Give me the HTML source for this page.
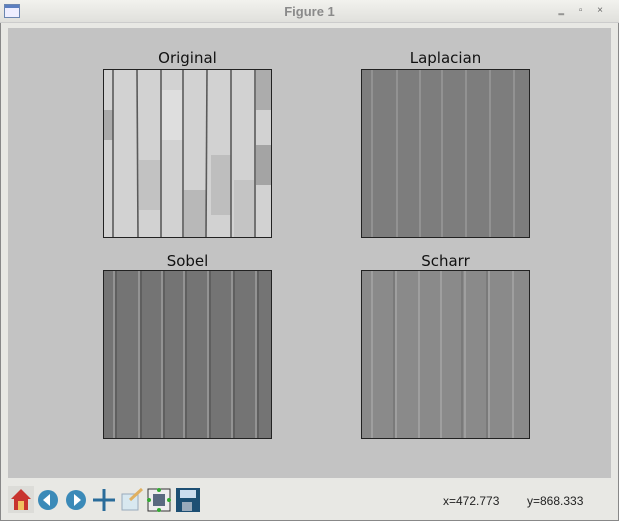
<!DOCTYPE html>
<html><head><style>
body{margin:0;width:619px;height:521px;background:#ececec;font-family:"Liberation Sans","DejaVu Sans",sans-serif;position:relative;overflow:hidden}
.win{position:absolute;left:0;top:0;width:617px;height:519px;border:1px solid #888;background:#e8e8e4}
.title{position:absolute;left:0;top:0;width:619px;height:22px;background:linear-gradient(#f2f2ee,#e0e0dc);border-bottom:1px solid #ccc}
.title span{position:absolute;left:0;width:619px;top:4px;text-align:center;font-size:13px;color:#8a8a8a;font-weight:bold}
.content{position:absolute;left:8px;top:28px;width:603px;height:450px;background:#c3c3c3}
.t{position:absolute;font-size:15px;color:#111;text-align:center;width:169px;font-family:"DejaVu Sans",sans-serif}
.ax{position:absolute;width:167px;height:167px;border:1px solid #222}
.coord{position:absolute;top:494px;font-size:12px;color:#222}
</style></head><body>
<div class="win"></div>
<div class="title"><div style="position:absolute;left:4px;top:4px;width:14px;height:12px;border:1px solid #6b86b0;background:linear-gradient(#5b7fc0 0 3px,#eef 3px)"></div><span>Figure 1</span><div style="position:absolute;right:10px;top:5px;font-size:10px;color:#666;letter-spacing:6px">‗ ▫ ×</div></div>
<div class="content"></div>
<div class="t" style="left:103px;top:49px">Original</div>
<div class="t" style="left:361px;top:49px">Laplacian</div>
<div class="t" style="left:103px;top:252px">Sobel</div>
<div class="t" style="left:361px;top:252px">Scharr</div>

<svg class="ax" style="left:103px;top:69px" viewBox="0 0 167 167">
<rect width="167" height="167" fill="#d2d2d2"/>
<rect x="0" y="40" width="9" height="30" fill="#aaa"/><rect x="152" y="0" width="15" height="40" fill="#acacac"/><rect x="152" y="75" width="15" height="40" fill="#a4a4a4"/><rect x="130" y="110" width="20" height="57" fill="#c4c4c4"/><rect x="80" y="120" width="22" height="47" fill="#b8b8b8"/><rect x="35" y="90" width="22" height="50" fill="#c2c2c2"/><rect x="107" y="85" width="20" height="60" fill="#bebebe"/><rect x="57" y="20" width="23" height="50" fill="#dedede"/>
<g stroke="#5a5a5a" stroke-width="1.6"><line x1="9" y1="0" x2="9" y2="167"/><line x1="33" y1="0" x2="34" y2="167"/><line x1="57" y1="0" x2="57" y2="167"/><line x1="79" y1="0" x2="79" y2="167"/><line x1="103" y1="0" x2="102" y2="167"/><line x1="127" y1="0" x2="127" y2="167"/><line x1="151" y1="0" x2="151" y2="167"/></g>
</svg>
<svg class="ax" style="left:361px;top:69px" viewBox="0 0 167 167">
<rect width="167" height="167" fill="#7d7d7d"/>
<g stroke="#a0a0a0" stroke-width="1.2"><line x1="10" y1="0" x2="10" y2="167"/><line x1="35" y1="0" x2="35" y2="167"/><line x1="58" y1="0" x2="58" y2="167"/><line x1="80" y1="0" x2="80" y2="167"/><line x1="104" y1="0" x2="104" y2="167"/><line x1="128" y1="0" x2="128" y2="167"/><line x1="152" y1="0" x2="152" y2="167"/></g>
</svg>
<svg class="ax" style="left:103px;top:270px" viewBox="0 0 167 167">
<rect width="167" height="167" fill="#747474"/>
<g stroke="#a8a8a8" stroke-width="1.2"><line x1="10" y1="0" x2="10" y2="167"/><line x1="35" y1="0" x2="35" y2="167"/><line x1="58" y1="0" x2="58" y2="167"/><line x1="80" y1="0" x2="80" y2="167"/><line x1="104" y1="0" x2="104" y2="167"/><line x1="128" y1="0" x2="128" y2="167"/><line x1="152" y1="0" x2="152" y2="167"/></g>
<g stroke="#4a4a4a" stroke-width="1"><line x1="12" y1="0" x2="12" y2="167"/><line x1="37" y1="0" x2="37" y2="167"/><line x1="60" y1="0" x2="60" y2="167"/><line x1="82" y1="0" x2="82" y2="167"/><line x1="106" y1="0" x2="106" y2="167"/><line x1="130" y1="0" x2="130" y2="167"/><line x1="154" y1="0" x2="154" y2="167"/></g>
</svg>
<svg class="ax" style="left:361px;top:270px" viewBox="0 0 167 167">
<rect width="167" height="167" fill="#8a8a8a"/>
<g stroke="#a6a6a6" stroke-width="1.5"><line x1="10" y1="0" x2="10" y2="167"/><line x1="34" y1="0" x2="34" y2="167"/><line x1="57" y1="0" x2="57" y2="167"/><line x1="79" y1="0" x2="79" y2="167"/><line x1="103" y1="0" x2="103" y2="167"/><line x1="127" y1="0" x2="127" y2="167"/><line x1="151" y1="0" x2="151" y2="167"/></g>
<g stroke="#6a6a6a" stroke-width="1"><line x1="32" y1="0" x2="32" y2="167"/><line x1="100" y1="0" x2="100" y2="167"/><line x1="125" y1="0" x2="125" y2="167"/></g>
</svg>

<svg style="position:absolute;left:8px;top:486px" width="200" height="28" viewBox="0 0 200 28">
<rect x="0" y="0" width="26" height="27" fill="#dcdcd8"/>
<polygon points="13,3 3,13 6,13 6,24 20,24 20,13 23,13" fill="#c8342f"/><rect x="10" y="15" width="6" height="9" fill="#f0c060"/>
<circle cx="40" cy="14" r="10" fill="#3b8ab8"/><polygon points="35,14 42,8 42,20" fill="#fff"/>
<circle cx="68" cy="14" r="10" fill="#3b8ab8"/><polygon points="73,14 66,8 66,20" fill="#fff"/>
<g stroke="#2a6c9a" stroke-width="3"><line x1="85" y1="14" x2="107" y2="14"/><line x1="96" y1="3" x2="96" y2="25"/></g>
<rect x="114" y="8" width="16" height="16" fill="#d8e8f0" stroke="#9ab"/><line x1="122" y1="14" x2="134" y2="3" stroke="#e0b060" stroke-width="3"/>
<rect x="140" y="3" width="22" height="22" fill="#eee" stroke="#333"/><rect x="145" y="8" width="12" height="12" fill="#5a6a80"/><circle cx="151" cy="4" r="2" fill="#3a3"/><circle cx="151" cy="24" r="2" fill="#3a3"/><circle cx="141" cy="14" r="2" fill="#3a3"/><circle cx="161" cy="14" r="2" fill="#3a3"/>
<rect x="168" y="2" width="24" height="24" fill="#1d4f73"/><rect x="172" y="4" width="16" height="8" fill="#cde"/><rect x="174" y="16" width="10" height="9" fill="#9ab"/>
</svg>
<div class="coord" style="left:443px">x=472.773</div>
<div class="coord" style="left:527px">y=868.333</div>
</body></html>
